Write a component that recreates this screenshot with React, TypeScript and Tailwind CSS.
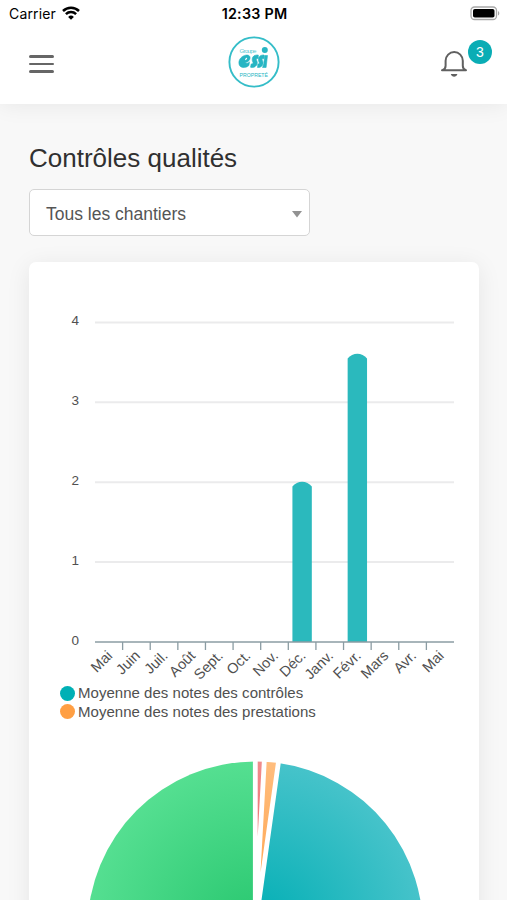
import React from 'react';

const months = ['Mai', 'Juin', 'Juil.', 'Août', 'Sept.', 'Oct.', 'Nov.', 'Déc.', 'Janv.', 'Févr.', 'Mars', 'Avr.', 'Mai'];
const averages = [0, 0, 0, 0, 0, 0, 0, 2, 0, 3.6, 0, 0, 0];
const legend = [
  { label: 'Moyenne des notes des contrôles', dot: 'bg-[#00b0b5]' },
  { label: 'Moyenne des notes des prestations', dot: 'bg-[#ff9f43]' },
];

function StatusBar() {
  return (
    <div className="grid h-7 grid-cols-3 items-center pl-[9px] pr-[7px] font-['Inter',sans-serif] text-black">
      <div className="mb-[2px] flex items-center gap-[6px]">
        <span className="text-[14px] tracking-[0.15px]">Carrier</span>
        <svg width="18" height="14" viewBox="0 0 18 14" fill="none" stroke="#000" strokeWidth="2.5">
          <path d="M1 5a11.5 11.5 0 0 1 16 0M3.9 8.2a7.3 7.3 0 0 1 10.2 0" />
          <path d="M9 13.8 6.1 10.9a4.2 4.2 0 0 1 5.8 0z" fill="#000" stroke="none" />
        </svg>
      </div>
      <span className="text-center text-[14.3px] font-semibold tracking-[0.25px]">12:33 PM</span>
      <svg className="mb-[2px] justify-self-end" width="30" height="15" viewBox="0 0 30 15">
        <rect x="1" y="1" width="25.5" height="12.5" rx="3.5" fill="#fff" stroke="#a8a8a8" strokeWidth="1.3" />
        <rect x="3" y="3" width="21.5" height="8.5" rx="1.8" fill="#000" />
        <path d="M28 5v4.6c1.8-.8 1.8-3.8 0-4.6z" fill="#a8a8a8" />
      </svg>
    </div>
  );
}

function Logo() {
  return (
    <svg width="52" height="52" viewBox="0 0 52 52" fill="#27b5c3" fontFamily="'Liberation Sans', sans-serif">
      <circle cx="26" cy="26" r="24.6" fill="#fff" stroke="#35bdc8" strokeWidth="1.9" />
      <text x="11.5" y="17" fontSize="6.2" textLength="17" opacity="0.75">Groupe</text>
      <g stroke="#27b5c3" strokeWidth="0.6">
        <path d="M17.5 19.2c3-.7 5.4 1 4.3 4-.7 2-2.5 3-4.6 3.3.7 1.2 2.4 1.2 4.3-.6l-.6 3.6c-2.5 2.8-9.9 3.3-10-2.6-.1-3.7 3-7 6.6-7.7z" />
        <path d="M30.3 19v3.6c-1.8-.3-2.3.4-1.6 1.8 1.8 3.7-.7 7.3-5.5 7.1l-.7-.3.7-3.3c1.8.3 2.3-.5 1.6-1.9-1.8-3.9.6-7.5 5.5-7z" />
        <path d="M36 19v3.6c-1.8-.3-2.3.4-1.6 1.8 1.8 3.7-.3 7.3-4.9 7.1l.4-3.6c1.3.3 1.8-.5 1.1-1.9-1.5-3.6.4-7.4 5-7z" />
        <path d="M36.6 19.5h2.9l-1.4 12h-3.6l1.3-3.8z" />
      </g>
      <path d="M17 24.3c1.5-.4 2.5-1.7 2-2.5-.7-.5-2 .8-2 2.5z" fill="#fff" />
      <circle cx="36.8" cy="14" r="3" />
      <text x="11.5" y="41" fontSize="6.2" textLength="28.5" lengthAdjust="spacingAndGlyphs">PROPRETÉ</text>
    </svg>
  );
}

function Header() {
  return (
    <header className="relative z-10 h-[104px] bg-white shadow-[0_0_22px_rgba(0,0,0,0.08)]">
      <StatusBar />
      <div className="grid h-[72px] grid-cols-3 items-center pl-[29px] pr-[39px]">
        <button className="flex w-[25px] flex-col gap-[5px]" aria-label="Menu">
          <span className="h-[2.4px] w-full rounded-full bg-[#666]" />
          <span className="h-[2.4px] w-full rounded-full bg-[#666]" />
          <span className="h-[2.4px] w-full rounded-full bg-[#666]" />
        </button>
        <div className="mb-[4px] ml-[11px] justify-self-center">
          <Logo />
        </div>
        <div className="relative justify-self-end">
          <svg width="28" height="30" viewBox="0 0 28 30" fill="none" stroke="#606060" strokeWidth="2" strokeLinecap="round" strokeLinejoin="round">
            <path d="M2 21.3h24M2.3 21.3c2.2-.6 3.3-2 3.3-4.5v-5a8.6 8.8 0 0 1 17.2 0v5c0 2.5 1 3.9 3.2 4.5" />
            <path d="M10.8 25h6.6c-.9 3.6-5.7 3.6-6.6 0z" fill="#606060" stroke="none" />
          </svg>
          <span className="absolute -right-[24px] -top-[9px] flex h-6 w-6 items-center justify-center rounded-full bg-[#0aadb5] pt-px text-[14px] text-white">3</span>
        </div>
      </div>
    </header>
  );
}

function BarChart() {
  const band = 359 / months.length;
  return (
    <svg className="block" width="450" height="422" viewBox="0 0 450 422" fill="#505050">
      {[4, 3, 2, 1, 0].map((n) => {
        const y = 380 - n * 79.9;
        return (
          <g key={n}>
            {n > 0 && <path d={`M66 ${y}h359`} stroke="#ebebec" strokeWidth="2" />}
            <text x="50" y={383 - n * 79.9} fontSize="13.5" textAnchor="end">{n}</text>
          </g>
        );
      })}
      {averages.map((v, i) => {
        if (!v) return null;
        const x = 66 + band * (i + 0.5) - 9.7;
        const y = 379.2 - v * 79.9;
        return <path key={i} d={`M${x} 380V${y + 5}C${x + 5} ${y - 1.3} ${x + 14.4} ${y - 1.3} ${x + 19.4} ${y + 5}V380z`} fill="#2bb9bd" />;
      })}
      <path d="M66 380h359" stroke="#8b9ca3" strokeWidth="1.6" />
      {months.map((m, i) => {
        const x = 66 + band * i;
        return (
          <g key={i}>
            {i > 0 && <path d={`M${x} 380v8`} stroke="#8b9ca3" strokeWidth="1.3" />}
            <text transform={`translate(${x + 18.3} 394.6) rotate(-45)`} fontSize="14.5" textAnchor="end">{m}</text>
          </g>
        );
      })}
    </svg>
  );
}

function PieChart() {
  return (
    <svg className="mx-auto block" width="340" height="340" viewBox="0 0 340 340">
      <defs>
        <radialGradient id="green" gradientUnits="userSpaceOnUse" cx="171" cy="170" r="168">
          <stop offset="0" stopColor="#28c76f" />
          <stop offset="1" stopColor="#55df91" />
        </radialGradient>
        <radialGradient id="teal" gradientUnits="userSpaceOnUse" cx="171" cy="170" r="168">
          <stop offset="0" stopColor="#00aeb4" />
          <stop offset="1" stopColor="#46c3ca" />
        </radialGradient>
        <radialGradient id="red" gradientUnits="userSpaceOnUse" cx="171" cy="170" r="168">
          <stop offset="0" stopColor="#ea5455" />
          <stop offset="1" stopColor="#f08c8d" />
        </radialGradient>
        <radialGradient id="orange" gradientUnits="userSpaceOnUse" cx="171" cy="170" r="168">
          <stop offset="0" stopColor="#ff9f43" />
          <stop offset="1" stopColor="#ffbd7d" />
        </radialGradient>
      </defs>
      <path d="M171 170V337.5A167.5 167.5 0 0 1 171 2.5z" fill="url(#green)" />
      <path d="M171 170V2.5A167.5 167.5 0 0 1 180 2.7z" fill="url(#red)" />
      <path d="M171 170 180 2.7A167.5 167.5 0 0 1 194.5 4.1z" fill="url(#orange)" />
      <path d="M171 170 194.5 4.1A167.5 167.5 0 0 1 171 337.5z" fill="url(#teal)" />
      <path d="M171.3 338V0M171 170 180.4 0M171 170 194.9 0" stroke="#fff" strokeWidth="4.8" />
    </svg>
  );
}

export default function App() {
  return (
    <div className="h-[900px] w-[507px] overflow-hidden bg-[#f8f8f8] font-['Liberation_Sans',Arial,sans-serif]">
      <Header />
      <main className="px-[29px] pt-[38px]">
        <h1 className="text-[26px] leading-8 text-[#303030]">Contrôles qualités</h1>
        <button className="mt-[15px] flex h-[47px] w-[281px] items-center justify-between rounded-[5px] border-[1.5px] border-[#d5d5d5] bg-white pl-4 pr-[7px] text-[17.5px] text-[#555]">
          <span className="mt-[4px]">Tous les chantiers</span>
          <svg className="mt-[4px]" width="10" height="7" viewBox="0 0 10 7" fill="#929292">
            <path d="M0 0h10L5 6.5z" />
          </svg>
        </button>
        <section className="mt-[26px] w-[450px] rounded-[7px] bg-white shadow-[0_4px_25px_rgba(0,0,0,0.08)]">
          <BarChart />
          <ul className="pl-[31px] text-[15px] tracking-[0.03px] text-[#505050]">
            {legend.map((item) => (
              <li key={item.label} className="flex h-[18.5px] items-center gap-[3px]">
                <span className={`h-[15px] w-[15px] rounded-full ${item.dot}`} />
                <span>{item.label}</span>
              </li>
            ))}
          </ul>
          <div className="pt-[38px]">
            <PieChart />
          </div>
        </section>
      </main>
    </div>
  );
}
